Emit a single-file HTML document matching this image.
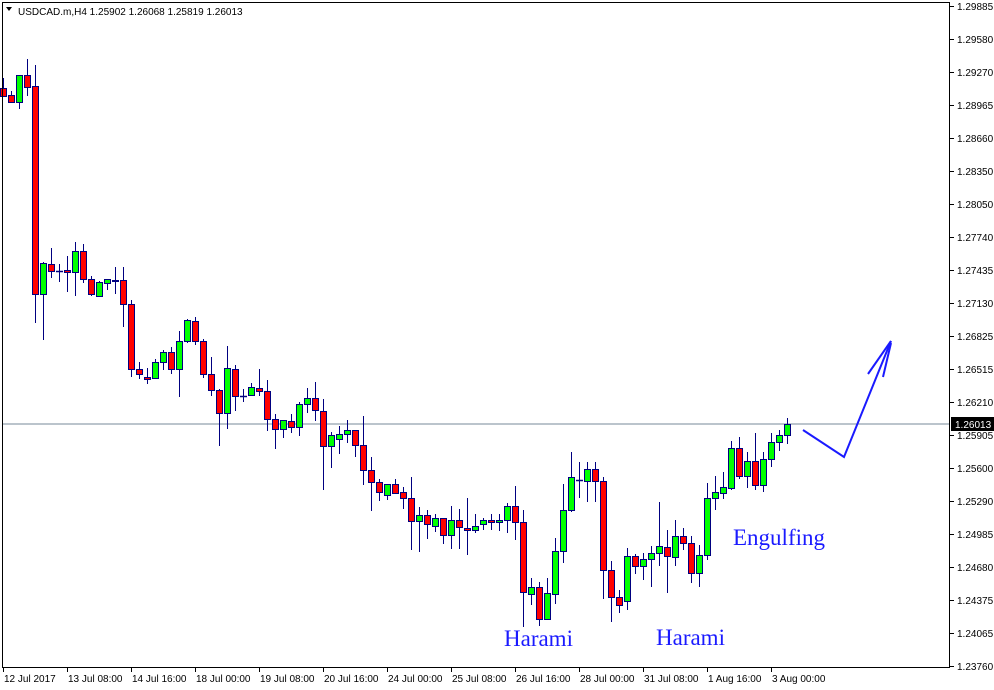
<!DOCTYPE html>
<html><head><meta charset="utf-8"><style>
html,body{margin:0;padding:0;background:#fff;width:994px;height:690px;overflow:hidden}
svg{display:block}
text{font-family:"Liberation Sans",sans-serif;font-size:10px;fill:#000}
.t{font-family:"Liberation Serif",serif;font-size:23px;fill:#1a1aff}
</style></head><body>
<svg id="s" width="994" height="690" viewBox="0 0 994 690" xmlns="http://www.w3.org/2000/svg">
<rect x="0" y="0" width="994" height="690" fill="#fff"/>
<line x1="2" y1="424" x2="950" y2="424" stroke="#778899" stroke-width="1"/>
<g id="c"></g>
<rect x="2.5" y="2.5" width="947" height="665" fill="none" stroke="#000" stroke-width="1"/>
<g id="ax"></g>
<rect x="951" y="417" width="43" height="14" fill="#000"/>
<text x="955" y="428" style="fill:#fff">1.26013</text>
<path d="M6 7 L12 7 L9 11 Z" fill="#000"/>
<text x="18" y="15">USDCAD.m,H4  1.25902 1.26068 1.25819 1.26013</text>
<polyline points="803,430 844,457 891,341" fill="none" stroke="#1a1aff" stroke-width="2"/>
<line x1="868" y1="374" x2="891" y2="341" stroke="#1a1aff" stroke-width="2"/>
<line x1="883" y1="377" x2="891" y2="343" stroke="#1a1aff" stroke-width="2"/>
<text class="t" x="504" y="646">Harami</text>
<text class="t" x="656" y="645">Harami</text>
<text class="t" x="733" y="545">Engulfing</text>
</svg>
<script>
var d=[
[3,78,88,96,97,0],[11,91,95,102,103,0],[19,75,102,75,109,1],[27,59,75,87,96,0],[35,65,86,294,323,0],
[43,262,294,263,340,1],[51,248,264,271,278,0],[59,264,271,271,282,0],[67,256,270,272,292,0],[75,242,272,251,296,1],
[83,244,251,279,283,0],[91,276,279,294,296,0],[99,281,296,282,297,1],[107,279,283,279,290,1],[115,267,280,281,294,0],
[123,267,280,304,327,0],[131,300,304,369,377,0],[139,362,369,374,379,0],[147,368,377,379,384,0],[155,359,378,362,378,1],
[163,350,362,352,370,1],[171,347,352,369,374,0],[179,331,369,341,397,1],[187,319,341,320,343,1],[195,317,321,341,345,0],
[203,339,341,374,378,0],[211,357,374,390,396,0],[219,389,390,413,446,0],[227,346,413,368,429,1],[235,365,369,396,411,0],
[243,389,396,396,402,0],[251,383,395,387,396,1],[259,369,388,391,396,0],[267,380,391,419,431,0],[275,414,419,429,449,0],
[283,420,429,420,438,1],[291,414,421,427,433,0],[299,402,427,404,436,1],[307,388,404,398,413,1],[315,382,398,410,421,0],
[323,399,411,446,490,0],[331,432,446,435,468,1],[339,426,439,434,454,1],[347,420,434,430,443,1],[355,430,430,445,457,0],
[363,416,445,470,485,0],[371,457,470,482,511,0],[379,479,482,492,501,0],[387,484,495,484,500,1],[395,479,484,493,494,0],
[403,487,492,498,509,0],[411,477,498,521,550,0],[419,507,521,515,552,1],[427,510,515,524,539,0],[435,514,526,518,532,1],
[443,518,518,535,544,0],[451,506,535,520,549,1],[459,509,520,527,549,0],[467,498,528,530,555,0],[475,514,530,526,533,1],
[483,518,524,520,530,1],[491,514,520,522,530,0],[499,514,522,520,531,1],[507,503,520,506,533,1],[515,486,506,522,540,0],
[523,510,522,592,627,0],[531,578,594,587,605,1],[539,582,587,619,626,0],[547,578,619,593,619,1],[555,538,594,551,604,1],
[563,484,551,510,563,1],[571,452,510,477,512,1],[579,462,480,480,498,0],[587,462,481,469,502,1],[595,462,469,481,502,0],
[603,477,481,570,599,0],[611,561,570,597,622,0],[619,590,597,605,613,0],[627,548,601,556,610,1],[635,554,556,566,574,0],
[643,553,566,559,580,1],[651,546,559,553,587,1],[659,502,553,546,566,1],[667,530,547,556,593,0],[675,520,557,536,566,1],
[683,528,536,543,550,0],[691,536,543,573,583,0],[699,545,573,555,587,1],[707,483,555,498,560,1],[715,476,498,492,510,1],
[723,472,493,487,499,1],[731,441,488,448,490,1],[739,437,448,476,479,0],[747,452,476,461,488,1],[755,433,461,485,490,0],
[763,452,485,459,492,1],[771,433,459,442,467,1],[779,430,442,435,451,1],[787,418,435,424,444,1]];
var h='';
d.forEach(function(a){var x=a[0],hi=a[1],o=a[2],c=a[3],lo=a[4];
h+='<line x1="'+(x+.5)+'" y1="'+hi+'" x2="'+(x+.5)+'" y2="'+lo+'" stroke="#000080" stroke-width="1"/>';
var t=Math.min(o,c),b=Math.max(o,c);
if(b-t<1){h+='<line x1="'+(x-3)+'" y1="'+(t+.5)+'" x2="'+(x+4)+'" y2="'+(t+.5)+'" stroke="#000080" stroke-width="1.5"/>';}
else h+='<rect x="'+(x-2.5)+'" y="'+(t+.5)+'" width="6" height="'+(b-t)+'" fill="'+(a[5]?'#00ff00':'#ff0000')+'" stroke="#000080" stroke-width="1"/>';
});
document.getElementById('c').innerHTML=h;
var ax='';
var p=['1.29885','1.29580','1.29270','1.28965','1.28660','1.28350','1.28050','1.27740','1.27435','1.27130','1.26825','1.26515','1.26210','1.25905','1.25600','1.25290','1.24985','1.24680','1.24375','1.24065','1.23760'];
p.forEach(function(s,i){var y=Math.round(6+i*33);if(s==='1.25905')y=435;
ax+='<line x1="950" y1="'+(y+.5)+'" x2="954" y2="'+(y+.5)+'" stroke="#000"/><text x="957" y="'+(y+4)+'">'+s+'</text>';});
var tl=['12 Jul 2017','13 Jul 08:00','14 Jul 16:00','18 Jul 00:00','19 Jul 08:00','20 Jul 16:00','24 Jul 00:00','25 Jul 08:00','26 Jul 16:00','28 Jul 00:00','31 Jul 08:00','1 Aug 16:00','3 Aug 00:00'];
tl.forEach(function(s,i){var x=3+i*64;
ax+='<line x1="'+(x+.5)+'" y1="668" x2="'+(x+.5)+'" y2="672" stroke="#000"/><text x="'+(x+1)+'" y="682">'+s+'</text>';});
document.getElementById('ax').innerHTML=ax;
</script>
</body></html>
